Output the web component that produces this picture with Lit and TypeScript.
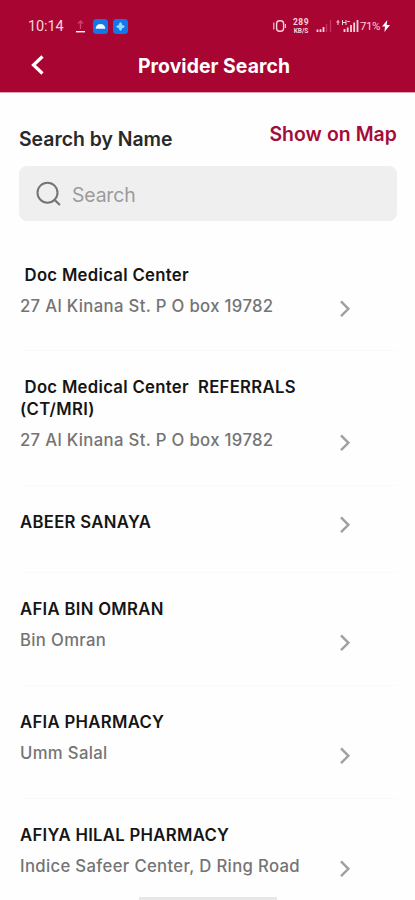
import { LitElement, html, css, nothing } from "lit";
import { customElement, property } from "lit/decorators.js";

interface Provider {
  name: string;
  address?: string;
}

const PROVIDERS: Provider[] = [
  { name: " Doc Medical Center", address: "27 Al Kinana St. P O box 19782" },
  { name: " Doc Medical Center  REFERRALS\n(CT/MRI)", address: "27 Al Kinana St. P O box 19782" },
  { name: "ABEER SANAYA" },
  { name: "AFIA BIN OMRAN", address: "Bin Omran" },
  { name: "AFIA PHARMACY", address: "Umm Salal" },
  { name: "AFIYA HILAL PHARMACY", address: "Indice Safeer Center, D Ring Road" },
];

@customElement("status-bar")
class StatusBar extends LitElement {
  static styles = css`
    :host {
      display: flex;
      align-items: center;
      height: 20px;
      padding: 16px 25px 0 28px;
      color: #f6d3dc;
      font-family: Roboto, sans-serif;
    }
    svg { display: block; flex: none; }
    .time { width: 47px; padding-top: 1px; font-size: 14.5px; letter-spacing: -0.1px; line-height: 20px; }
    .upload { margin-right: 7px; }
    .tile { margin-right: 5px; }
    .spacer { flex: 1; }
    .vibrate { margin-right: 6px; }
    .rate { display: flex; flex-direction: column; align-items: center; width: 18px; margin-right: 6px; font-weight: 700; }
    .count { font-size: 8.5px; line-height: 9px; letter-spacing: 0.5px; }
    .unit { font-size: 6.5px; line-height: 8px; }
    .sim { margin-right: 4px; }
    .battery { width: 21px; font-size: 11.5px; line-height: 20px; letter-spacing: -0.5px; margin-right: 1px; }
  `;
  render() {
    return html`
      <span class="time">10:14</span>
      <svg class="upload" width="11" height="14" viewBox="0 0 11 14">
        <path d="M5.5 10V2M3 4.5 5.5 2 8 4.5" fill="none" stroke="#d24168" stroke-width="1.4" />
        <path d="M1 12.7h9" stroke="#fff" stroke-width="1.4" />
      </svg>
      <svg class="tile" width="15" height="15" viewBox="0 0 15 15">
        <rect width="15" height="15" rx="3.5" fill="#1476ea" />
        <path d="M2.7 9.7C2.8 7 4.7 5 7.5 5s4.7 2 4.8 4.7z" fill="#eefaff" />
      </svg>
      <svg width="15" height="15" viewBox="0 0 15 15">
        <rect width="15" height="15" rx="3.5" fill="#1476ea" />
        <path d="m7.5 3 1.6 1.8v1.4h1.3l1.5 1.4-1.5 1.4H9.1v1.3L7.5 12l-1.6-1.7V9H4.6L3.1 7.6l1.5-1.4h1.3V4.8z" fill="#8bdcff" />
      </svg>
      <span class="spacer"></span>
      <svg class="vibrate" width="13" height="14" viewBox="0 0 13 14">
        <rect x="3.6" y="1.7" width="7" height="10.6" rx="3" fill="none" stroke="#f6d3dc" stroke-width="1.4" />
        <path d="M0.8 3.5v7M12.4 5v4" stroke="#f6d3dc" stroke-width="1.1" />
      </svg>
      <span class="rate"><span class="count">289</span><span class="unit">KB/S</span></span>
      <svg class="sim" width="16" height="12" viewBox="0 0 16 12">
        <path d="M1.5 12V9.5M4.5 12V9.2M7.5 12V7" stroke="#f6d3dc" stroke-width="1.8" />
        <path d="M10.5 12V4M14.5 12V0" stroke="#c33560" stroke-width="1.4" />
      </svg>
      <svg width="24" height="14" viewBox="0 0 24 14">
        <path d="M2 1v5M.5 3h3M6.5 1v5M6.5 3.5h3.5M10 1v5M11.3 2.5h2.6" stroke="#f6d3dc" stroke-width="1" />
        <path d="M8.5 13v-3M11.7 13V8.5M15 13V6M18.2 13V3.5M21.5 13V1" stroke="#f6d3dc" stroke-width="1.8" />
      </svg>
      <span class="battery">71%</span>
      <svg width="8" height="12" viewBox="0 0 8 12">
        <path d="M5.3 0 0 6.6h3L2.4 12 8 5H4.7z" fill="#fff" />
      </svg>
    `;
  }
}

@customElement("provider-row")
class ProviderRow extends LitElement {
  @property({ attribute: false }) provider!: Provider;

  static styles = css`
    :host { display: block; }
    .row {
      display: flex;
      align-items: flex-end;
      box-sizing: border-box;
      margin: 0 17px 0 20px;
      padding: 26px 45px 33.4px 0;
      border-bottom: 1px solid #fafafa;
    }
    .row.single { padding-bottom: 39px; }
    .body { flex: 1; min-width: 0; }
    .name {
      white-space: pre;
      font-size: 16.7px;
      line-height: 21.4px;
      letter-spacing: 0.31px;
      font-weight: 600;
      color: #151515;
    }
    .address {
      margin-top: 10px;
      font-size: 16.7px;
      line-height: 21px;
      letter-spacing: 0.34px;
      font-weight: 500;
      color: #747474;
    }
    .chevron { display: block; flex: none; }
  `;
  render() {
    const { name, address } = this.provider;
    return html`
      <div class="row ${address ? "" : "single"}">
        <div class="body">
          <div class="name">${name}</div>
          ${address ? html`<div class="address">${address}</div>` : nothing}
        </div>
        <svg class="chevron" width="14" height="17" viewBox="0 0 14 17">
          <path d="m2 1.4 7.4 7.4L2 16.2" fill="none" stroke="#a0a0a0" stroke-width="2.4" />
        </svg>
      </div>
    `;
  }
}

@customElement("app-root")
class AppRoot extends LitElement {
  static styles = css`
    :host {
      display: block;
      position: relative;
      box-sizing: border-box;
      width: 100%;
      height: 900px;
      overflow: hidden;
      background: #fefefe;
      font-family: Inter, sans-serif;
    }
    .top { height: 92px; background: #a90533; border-bottom: 1px solid #dfa5b5; }
    .bar { display: grid; grid-template-columns: 60px 1fr 60px; align-items: center; height: 58px; }
    .back { display: block; margin-left: 30px; }
    .title { margin: 0; padding: 1px 0 0 13px; text-align: center; font-size: 19.4px; line-height: 24px; letter-spacing: 0.05px; font-weight: 700; color: #fff; }
    .heading { display: flex; justify-content: space-between; align-items: flex-start; padding: 29px 18px 0 19px; height: 44px; }
    .label { padding-top: 5px; font-size: 19.4px; line-height: 24px; font-weight: 600; color: #292929; }
    .map { font-size: 19.4px; line-height: 24px; letter-spacing: 0.07px; font-weight: 600; color: #a30c38; }
    .search { display: flex; align-items: center; gap: 11px; height: 55px; margin: 0 18px 0 19px; padding-left: 17px; box-sizing: border-box; border-radius: 8px; background: #efefef; }
    .search svg { display: block; }
    .hint { padding-top: 2px; font-size: 19.4px; line-height: 24px; letter-spacing: -0.15px; color: #9b9b9b; }
    .list { padding-top: 17.6px; }
    .home { position: absolute; left: 139px; bottom: 0; width: 138px; height: 3px; background: #e7e7e7; }
  `;
  render() {
    return html`
      <header class="top">
        <status-bar></status-bar>
        <div class="bar">
          <svg class="back" width="15" height="20" viewBox="0 0 15 20">
            <path d="M12.5 1.5 3.5 10l9 8.5" fill="none" stroke="#fff" stroke-width="3.2" />
          </svg>
          <h1 class="title">Provider Search</h1>
        </div>
      </header>
      <div class="heading">
        <span class="label">Search by Name</span>
        <span class="map">Show on Map</span>
      </div>
      <div class="search">
        <svg width="25" height="26" viewBox="0 0 25 26">
          <circle cx="11.5" cy="11.7" r="10" fill="none" stroke="#747474" stroke-width="2" />
          <path d="m18.2 18.5 5.7 5.5" stroke="#747474" stroke-width="2.2" />
        </svg>
        <span class="hint">Search</span>
      </div>
      <main class="list">
        ${PROVIDERS.map((p) => html`<provider-row .provider=${p}></provider-row>`)}
      </main>
      <div class="home"></div>
    `;
  }
}
